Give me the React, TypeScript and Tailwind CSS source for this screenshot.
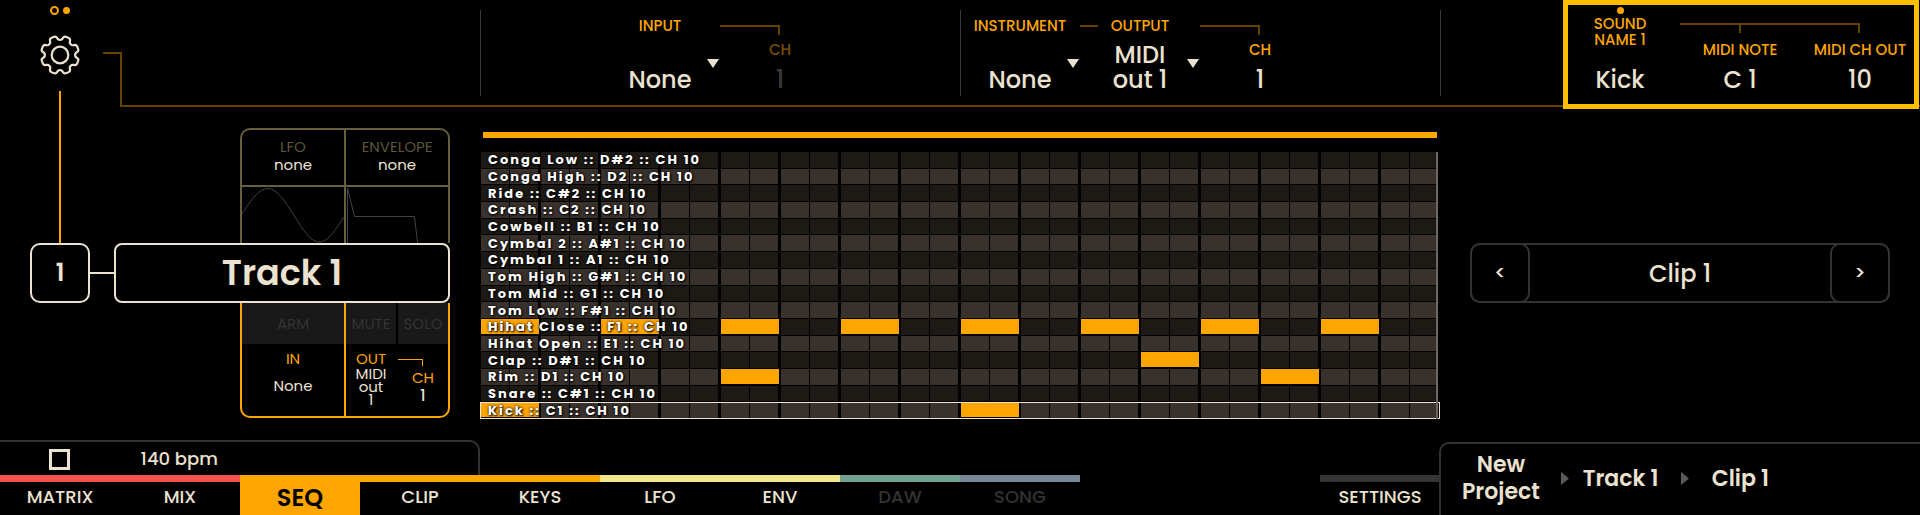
import type { ReactNode } from "react";
import clsx from "clsx";

type SequencerRow = {
  name: string;
  note: string;
  beats: number[];
};

type Tab = {
  label: string;
  bar: string;
  active?: boolean;
  disabled?: boolean;
};

const BEATS = Array.from({ length: 16 }, (_, i) => i);

const ROWS: SequencerRow[] = [
  { name: "Conga Low", note: "D#2", beats: [] },
  { name: "Conga High", note: "D2", beats: [] },
  { name: "Ride", note: "C#2", beats: [] },
  { name: "Crash", note: "C2", beats: [] },
  { name: "Cowbell", note: "B1", beats: [] },
  { name: "Cymbal 2", note: "A#1", beats: [] },
  { name: "Cymbal 1", note: "A1", beats: [] },
  { name: "Tom High", note: "G#1", beats: [] },
  { name: "Tom Mid", note: "G1", beats: [] },
  { name: "Tom Low", note: "F#1", beats: [] },
  { name: "Hihat Close", note: "F1", beats: [0, 2, 4, 6, 8, 10, 12, 14] },
  { name: "Hihat Open", note: "E1", beats: [] },
  { name: "Clap", note: "D#1", beats: [11] },
  { name: "Rim", note: "D1", beats: [4, 13] },
  { name: "Snare", note: "C#1", beats: [] },
  { name: "Kick", note: "C1", beats: [0, 8] },
];

const TABS: Tab[] = [
  { label: "MATRIX", bar: "border-[#f4524d]" },
  { label: "MIX", bar: "border-[#f4524d]" },
  { label: "SEQ", bar: "border-[#ffa500]", active: true },
  { label: "CLIP", bar: "border-[#ffa500]" },
  { label: "KEYS", bar: "border-[#ffa500]" },
  { label: "LFO", bar: "border-[#f0e68c]" },
  { label: "ENV", bar: "border-[#f0e68c]" },
  { label: "DAW", bar: "border-[#72a091]", disabled: true },
  { label: "SONG", bar: "border-[#778899]", disabled: true },
];

// Eight flat teeth with narrow round notches between them.
function gearPath() {
  const points: string[] = [];
  for (let deg = 0; deg < 360; deg += 2) {
    const angle = (deg * Math.PI) / 180;
    const wave = Math.tanh(2.4 * (0.25 - Math.cos(8 * angle)));
    const radius = 17.1 + 2 * wave;
    points.push(`${(20 + radius * Math.sin(angle)).toFixed(2)} ${(20 - radius * Math.cos(angle)).toFixed(2)}`);
  }
  return `M${points.join("L")}Z`;
}

const GEAR_PATH = gearPath();

function GearIcon() {
  return (
    <svg viewBox="0 0 40 40" className="size-10" fill="none" stroke="currentColor" strokeWidth="2.2" strokeLinejoin="round">
      <path d={GEAR_PATH} />
      <circle cx="20" cy="20" r="8.3" />
    </svg>
  );
}

function Value({ children, dim }: { children: ReactNode; dim?: boolean }) {
  return (
    <p className={clsx("mt-auto text-center text-2xl leading-[25px]", dim ? "text-[#3a3a3a]" : "text-[#ece2d0]")}>
      {children}
    </p>
  );
}

type PickerProps = {
  id: string;
  label: string;
  value: string;
  linked?: boolean;
};

function Picker({ id, label, value, linked }: PickerProps) {
  return (
    <div className="flex flex-col pt-[17px] pb-[13px]">
      <div className="flex items-center justify-center">
        {linked && <span className="h-[2px] w-[18px] bg-[#664200]" />}
        <label htmlFor={id} className="flex-1 text-center leading-[18px]">
          {label}
        </label>
        {linked && <span className="w-[18px]" />}
      </div>
      <div className="relative mt-auto flex h-[50px] text-[#ece2d0]">
        <span className="w-[13px]" />
        <span className="flex-1 self-end text-center text-2xl leading-[25px]">{value}</span>
        <svg viewBox="0 0 12 9" className="mt-[17px] mr-px h-[9px] w-3" fill="currentColor">
          <path d="M0 0H12L6 9Z" />
        </svg>
        <select id={id} defaultValue={value} className="absolute inset-0 cursor-pointer opacity-0">
          <option>{value}</option>
        </select>
      </div>
    </div>
  );
}

function Channel({ value, dim }: { value: string; dim?: boolean }) {
  return (
    <div className="flex flex-col pt-[25px] pb-[13px]">
      <span className="h-[10px] w-1/2 border-t-2 border-r-2 border-[#664200]" />
      <p className={clsx("mt-[6px] text-center leading-[18px]", dim && "text-[#7a4f00]")}>CH</p>
      <Value dim={dim}>{value}</Value>
    </div>
  );
}

function Divider() {
  return <span className="mt-[10px] -mr-px block h-[86px] w-px bg-[#3a3a3a]" />;
}

function TopBar() {
  return (
    <header className="grid h-[107px] grid-cols-16 text-[15px] font-medium text-[#ffa500]">
      <div className="grid grid-cols-3">
        <span />
        <div className="flex flex-col items-center">
          <div className="mt-[6px] flex h-[9px] items-center gap-1">
            <span className="size-[9px] rounded-full border-2 border-[#ffa500]" />
            <span className="size-[7px] rounded-full bg-[#ffa500]" />
          </div>
          <button type="button" aria-label="Settings" className="mt-5 text-[#ece2d0]">
            <GearIcon />
          </button>
          <span className="mt-4 w-[2px] flex-1 bg-[#ffa500]" />
        </div>
        <span className="mt-[52px] -mr-[2px] w-[19px] justify-self-end border-t-2 border-r-2 border-[#664200]" />
      </div>

      <div className="col-span-3 border-b-2 border-[#664200]" />

      <div className="col-span-4 grid grid-cols-4 border-b-2 border-[#664200]">
        <Divider />
        <Picker id="input" label="INPUT" value="None" />
        <Channel value="1" dim />
      </div>

      <div className="col-span-4 flex border-b-2 border-[#664200]">
        <Divider />
        <div className="grid flex-1 grid-cols-4">
          <Picker id="instrument" label="INSTRUMENT" value="None" />
          <Picker id="output" label="OUTPUT" value="MIDI out 1" linked />
          <Channel value="1" />
        </div>
      </div>

      <div className="border-b-2 border-[#664200]">
        <Divider />
      </div>

      <div className="relative col-span-3 grid grid-cols-3 border-b-2 border-[#664200]">
        <div className="flex flex-col items-center pt-[7px] pb-[13px]">
          <span className="size-[7px] rounded-full bg-[#ffa500]" />
          <p className="mt-[2px] w-16 text-center leading-4">SOUND NAME 1</p>
          <Value>Kick</Value>
        </div>
        <div className="flex flex-col items-center pt-[23px] pb-[13px]">
          <span className="flex h-[10px] w-full justify-center border-t-2 border-[#664200]">
            <span className="w-[2px] bg-[#664200]" />
          </span>
          <p className="mt-2 leading-[18px]">MIDI NOTE</p>
          <Value>C 1</Value>
        </div>
        <div className="flex flex-col pt-[23px] pb-[13px]">
          <span className="h-[10px] w-1/2 border-t-2 border-r-2 border-[#664200]" />
          <p className="mt-2 text-center leading-[18px]">MIDI CH OUT</p>
          <Value>10</Value>
        </div>
        <span className="pointer-events-none absolute top-0 right-px -bottom-1 left-[3px] border-[5px] border-[#ffbf00]" />
      </div>
    </header>
  );
}

function ModulationPanel() {
  return (
    <div className="mr-[30px] ml-[50%] grid h-[115px] grid-cols-2 rounded-t-[10px] border-2 border-b-0 border-[#665f3d] text-center text-[15px] leading-[18px]">
      <div className="-mr-px flex flex-col border-r-2 border-[#665f3d]">
        <div className="h-[57px] border-b-2 border-[#665f3d] pt-2">
          <p className="text-[#5c5636]">LFO</p>
          <p className="text-[#ece2d0]">none</p>
        </div>
        <svg viewBox="0 0 102 56" preserveAspectRatio="none" className="h-14 w-full" fill="none" stroke="#424242">
          <path d="M0 27C9 13 17 1.500 26 1.500C44 1.500 60 55 77 55C87 55 95 40 102 30" />
        </svg>
      </div>
      <div className="ml-px flex flex-col">
        <div className="h-[57px] border-b-2 border-[#665f3d] pt-2">
          <p className="text-[#5c5636]">ENVELOPE</p>
          <p className="text-[#ece2d0]">none</p>
        </div>
        <svg viewBox="0 0 102 56" preserveAspectRatio="none" className="h-14 w-full" fill="none" stroke="#424242">
          <path d="M1.500 56V1L8.500 29.500H68.500L71.500 56" />
        </svg>
      </div>
    </div>
  );
}

function RoutingPanel() {
  return (
    <div className="mr-[30px] ml-[50%] grid h-[115px] grid-cols-2 rounded-b-[10px] border-2 border-t-0 border-[#ffa500] text-center text-[15px] leading-[18px] text-[#ffa500]">
      <div className="-mr-px flex flex-col border-r-2 border-[#ffa500]">
        <button type="button" className="h-[41px] bg-[#191919] text-[#333333]">
          ARM
        </button>
        <p className="mt-[6px]">IN</p>
        <p className="mt-[9px] text-[#ece2d0]">None</p>
      </div>
      <div className="ml-px flex flex-col">
        <div className="grid h-[41px] grid-cols-2 gap-[2px] text-[#333333]">
          <button type="button" className="bg-[#191919]">
            MUTE
          </button>
          <button type="button" className="bg-[#191919]">
            SOLO
          </button>
        </div>
        <div className="grid grid-cols-2 gap-[2px]">
          <div className="mt-[7px] leading-4">
            <p>OUT</p>
            <p className="mx-auto w-8 leading-[13px] text-[#ece2d0]">MIDI out 1</p>
          </div>
          <div className="mt-[15px] flex flex-col">
            <span className="h-[7px] w-1/2 border-t border-r border-[#ffa500]" />
            <p className="mt-[3px]">CH</p>
            <p className="font-medium text-[#ece2d0]">1</p>
          </div>
        </div>
      </div>
    </div>
  );
}

function TrackColumn() {
  return (
    <section className="col-span-4 flex flex-col">
      <div className="flex">
        <div className="flex w-1/4 justify-center">
          <span className="w-[2px] bg-[#ffa500]" />
        </div>
        <div className="-ml-[25%] w-full pt-[21px]">
          <ModulationPanel />
        </div>
      </div>
      <div className="flex items-center px-[30px] text-[#ece2d0]">
        <button type="button" className="size-[60px] rounded-[10px] border-2 border-current text-2xl font-semibold">
          1
        </button>
        <span className="h-[2px] w-6 bg-[#ece2d0]" />
        <button type="button" className="h-[60px] flex-1 rounded-lg border-2 border-current text-[35px] font-semibold">
          Track 1
        </button>
      </div>
      <RoutingPanel />
    </section>
  );
}

function Beat({ filled, light }: { filled: boolean; light: boolean }) {
  if (filled) {
    return <span className="mx-px mb-px bg-[#ffa500]" />;
  }
  const tone = light ? "bg-[#39312b]" : "bg-[#1d1a15]";
  return (
    <span className="grid grid-cols-2 gap-px pr-[2px] pl-px">
      <span className={tone} />
      <span className={tone} />
    </span>
  );
}

function Sequencer() {
  return (
    <section className="col-span-8 pt-[25px]">
      <div className="mx-[3px] h-[6px] bg-[#ffa500]" />
      <div className="relative mt-[14px] grid h-[267px] auto-rows-fr">
        {ROWS.map((row, index) => {
          const selected = row.name === "Kick";
          return (
            <div key={row.name} className="relative grid grid-cols-16 pb-px">
              {BEATS.map((beat) => (
                <Beat key={beat} filled={row.beats.includes(beat)} light={index % 2 === 1} />
              ))}
              <span className="absolute inset-y-0 left-2 flex items-center text-[13px] leading-4 font-bold tracking-[2px] whitespace-pre text-white [text-shadow:0_0_3px_#000,1px_1px_2px_#000]">
                {`${row.name} :: ${row.note} :: CH 10`}
              </span>
              {selected && <span className="absolute inset-0 border border-[#ece2d0]" />}
            </div>
          );
        })}
        <span className="absolute inset-y-0 right-[2px] w-[2px] bg-[#6f675f]" />
      </div>
    </section>
  );
}

function ClipColumn() {
  return (
    <section className="col-span-4 px-[30px] pt-[136px] text-[#ece2d0]">
      <div className="flex h-[60px] rounded-[10px] bg-black ring-2 ring-[#333333] ring-inset">
        <button type="button" aria-label="Previous clip" className="w-[60px] rounded-[10px] border-2 border-[#333333] text-xl font-medium">
          &lt;
        </button>
        <p className="flex-1 text-center text-2xl leading-[62px] font-medium">Clip 1</p>
        <button type="button" aria-label="Next clip" className="w-[60px] rounded-[10px] border-2 border-[#333333] text-xl font-medium">
          &gt;
        </button>
      </div>
    </section>
  );
}

function CrumbArrow() {
  return (
    <svg viewBox="0 0 8 13" className="h-[13px] w-2" fill="#5a5a5a">
      <path d="M0 0L8 6.500L0 13Z" />
    </svg>
  );
}

function BottomBar() {
  return (
    <footer className="mt-auto grid grid-cols-16 font-semibold text-[#ece2d0]">
      <div className="col-span-12">
        <div className="grid h-[35px] w-1/3 grid-cols-4 items-center rounded-tr-[10px] border-t-2 border-r-2 border-[#333333] pt-px">
          <button type="button" aria-label="Stop" className="size-[21px] justify-self-center border-[3px] border-current" />
          <p className="text-center text-lg leading-6 font-medium">140 bpm</p>
        </div>
        <nav className="grid h-[41px] grid-cols-12">
          {TABS.map((tab) => (
            <button
              key={tab.label}
              type="button"
              disabled={tab.disabled}
              className={clsx(
                "border-t-[7px]",
                tab.bar,
                tab.active ? "bg-[#ffa500] pb-2 text-2xl text-black" : "pb-[10px] text-lg leading-6 font-medium",
                tab.disabled && "text-[#333333]",
              )}
            >
              {tab.label}
            </button>
          ))}
          <button type="button" className="col-start-12 border-t-[7px] border-[#353535] pb-[10px] text-lg leading-6 font-medium">
            SETTINGS
          </button>
        </nav>
      </div>
      <nav className="col-span-4 mt-[2px] -ml-px grid grid-cols-4 items-center rounded-tl-[10px] border-t-2 border-l-2 border-[#333333] pb-1 text-center text-[22px] leading-[27px]">
        <a href="#project">New Project</a>
        <div className="flex items-center">
          <CrumbArrow />
          <a href="#track" className="-ml-2 flex-1 whitespace-nowrap">
            Track 1
          </a>
        </div>
        <div className="flex items-center">
          <CrumbArrow />
          <a href="#clip" className="-ml-2 flex-1 whitespace-nowrap">
            Clip 1
          </a>
        </div>
      </nav>
    </footer>
  );
}

export default function App() {
  return (
    <div className="flex min-h-screen flex-col bg-black font-['Poppins','Inter',sans-serif]">
      <TopBar />
      <main className="grid grid-cols-16 pb-[21px]">
        <TrackColumn />
        <Sequencer />
        <ClipColumn />
      </main>
      <BottomBar />
    </div>
  );
}
